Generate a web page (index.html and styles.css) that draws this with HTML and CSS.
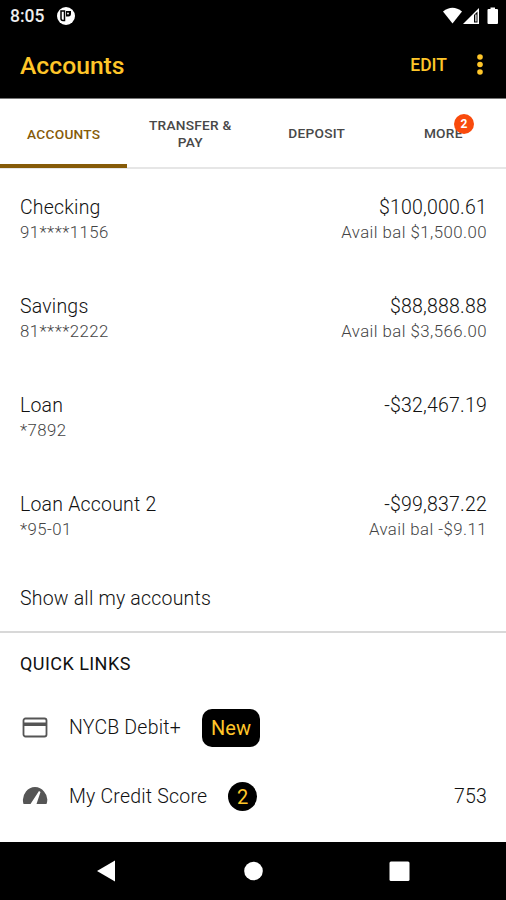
FILE: index.html
```
<!DOCTYPE html>
<html lang="en">
<head>
	<meta charset="utf-8">
	<title>Accounts</title>
	<link rel="stylesheet" href="styles.css">
</head>
<body>
	<div class="status">
		<span class="time">8:05</span>
		<svg class="notif" width="18" height="18" viewBox="0 0 18 18"><circle cx="9" cy="9" r="9" fill="#fff"/><path d="M4 4H7.5V13.5H6Q4 13.5 4 11.500Z" fill="#fff" stroke="#000" stroke-width="1.500"/><path d="M9 4H14V6.500Q14 9.500 11.500 9.500H9Z" fill="#000"/><circle cx="11" cy="6.500" r="0.900" fill="#fff"/></svg>
		<svg class="signals" width="56" height="18" viewBox="0 0 56 18"><path d="M0 4.500Q9.500-3 19 4.500L9.500 16.500Z" fill="#fff"/><path d="M20 17L36 1V17Z" fill="#fff"/><path d="M31 8L34.500 4.500V15.500H31Z" fill="#000"/><path d="M32.300 7.500H33.500V14.500H32.300Z" fill="#fff"/><path d="M45.500 2H47.500V0.500H52V2H54Q55 2 55 3V16Q55 17 54 17H45.500Q44.500 17 44.500 16V3Q44.500 2 45.500 2Z" fill="#fff"/></svg>
	</div>
	<header class="appbar">
		<h1>Accounts</h1>
		<span class="edit">EDIT</span>
		<svg width="6" height="22" viewBox="0 0 6 22"><g fill="#ffc629"><circle cx="3" cy="3" r="2.800"/><circle cx="3" cy="10.500" r="2.800"/><circle cx="3" cy="18" r="2.800"/></g></svg>
	</header>
	<nav class="tabs">
		<div class="tab active"><span>ACCOUNTS</span></div>
		<div class="tab"><span>TRANSFER &amp;<br>PAY</span></div>
		<div class="tab"><span>DEPOSIT</span></div>
		<div class="tab"><span class="more">MORE<b class="count">2</b></span></div>
	</nav>
	<main>
		<div class="account">
			<div><p class="name">Checking</p><p class="sub">91****1156</p></div>
			<div class="right"><p class="name">$100,000.61</p><p class="sub">Avail bal $1,500.00</p></div>
		</div>
		<div class="account">
			<div><p class="name">Savings</p><p class="sub">81****2222</p></div>
			<div class="right"><p class="name">$88,888.88</p><p class="sub">Avail bal $3,566.00</p></div>
		</div>
		<div class="account">
			<div><p class="name">Loan</p><p class="sub">*7892</p></div>
			<div class="right"><p class="name">-$32,467.19</p></div>
		</div>
		<div class="account">
			<div><p class="name">Loan Account 2</p><p class="sub">*95-01</p></div>
			<div class="right"><p class="name">-$99,837.22</p><p class="sub">Avail bal -$9.11</p></div>
		</div>
		<div class="showall">Show all my accounts</div>
		<h2>QUICK LINKS</h2>
		<div class="link">
			<svg width="26" height="22" viewBox="0 0 26 22"><rect x="1.500" y="1.500" width="23" height="18" rx="2" fill="none" stroke="#555" stroke-width="1.800"/><path d="M1 5.500H25V9H1Z" fill="#555"/></svg>
			<span class="label debit">NYCB Debit+</span>
			<span class="new">New</span>
		</div>
		<div class="link">
			<svg width="26" height="22" viewBox="0 0 26 22"><path d="M1.500 18Q-0.500 11 4 5.500Q7.500 1 13 1Q18.500 1 22 5.500Q27 11 24.500 18H14.500L18.500 6L17 5L8.500 18Z" fill="#555"/></svg>
			<span class="label">My Credit Score</span>
			<span class="round">2</span>
			<span class="score">753</span>
		</div>
	</main>
	<footer class="navbar">
		<svg width="506" height="58" viewBox="0 0 506 58"><g fill="#fff"><path d="M97 29L115 18.500V39.500Z"/><circle cx="253.500" cy="29" r="9.300"/><rect x="389.500" y="19.500" width="20" height="19.500" rx="1.500"/></g></svg>
	</footer>
</body>
</html>
```
FILE: styles.css
```
*{
	box-sizing: border-box;
	margin: 0;
	padding: 0;
}
body{
	width: 506px;
	height: 900px;
	overflow: hidden;
	background: #fff;
	color: #111;
	font-family: Roboto, sans-serif;
}
svg{
	display: block;
	flex: none;
}
.status{
	display: flex;
	align-items: center;
	height: 32px;
	padding: 0 7px 0 10px;
	background: #000;
	color: #eee;
}
.time{
	width: 47px;
	font-size: 17.5px;
	font-weight: 500;
}
.signals{
	margin-left: auto;
}
.appbar{
	display: flex;
	align-items: center;
	height: 67px;
	padding: 0 23px 0 20px;
	background: #000;
	color: #ffc629;
	border-bottom: 1px solid #777;
}
h1{
	flex: 1;
	font-size: 24.7px;
	font-weight: 500;
}
.edit{
	margin-right: 30px;
	font-size: 17.5px;
	font-weight: 500;
}
.tabs{
	display: flex;
	height: 70px;
	border-bottom: 2px solid #e6e6e6;
}
.tab{
	flex: 1;
	display: flex;
	align-items: center;
	justify-content: center;
	padding: 1px 0 0 1px;
	text-align: center;
	color: #484848;
	font-size: 13.7px;
	letter-spacing: 0.25px;
	line-height: 17px;
	font-weight: 500;
}
.tab span{
	white-space: nowrap;
}
.active{
	color: #865b08;
	height: 69px;
	border-bottom: 4px solid #865b08;
	padding-top: 5px;
}
.more{
	position: relative;
}
.count{
	position: absolute;
	left: 30px;
	top: -11px;
	width: 20px;
	height: 20px;
	border-radius: 50%;
	background: #f94a0c;
	color: #fff;
	font-size: 12px;
	letter-spacing: 0;
	line-height: 20px;
}
.account{
	display: flex;
	justify-content: space-between;
	height: 99px;
	padding: 27px 19px 0 20px;
}
.right{
	text-align: right;
}
.name, .showall, .label, .score{
	font-size: 19.5px;
	font-weight: 300;
	letter-spacing: 0.2px;
	line-height: 24px;
}
.sub{
	font-size: 16.8px;
	font-weight: 300;
	letter-spacing: 0.45px;
	line-height: 24px;
	color: #444;
}
.showall{
	height: 68px;
	padding: 22px 20px;
	border-bottom: 2px solid #d8d8d8;
}
h2{
	height: 60px;
	padding: 0 20px;
	font-size: 18px;
	letter-spacing: 0.45px;
	line-height: 61px;
	font-weight: 400;
}
.link{
	display: flex;
	align-items: center;
	height: 69px;
	padding: 0 19px 0 22px;
}
.label{
	margin-left: 21px;
	width: 159px;
}
.debit{
	width: 133px;
}
.new, .round{
	height: 38px;
	width: 58px;
	border-radius: 10px;
	background: #000;
	color: #ffc629;
	font-size: 20px;
	line-height: 38px;
	text-align: center;
}
.round{
	width: 29px;
	height: 29px;
	border-radius: 50%;
	line-height: 30px;
}
.score{
	margin-left: auto;
}
.navbar{
	height: 58px;
	margin-top: 11px;
	background: #000;
}
```
